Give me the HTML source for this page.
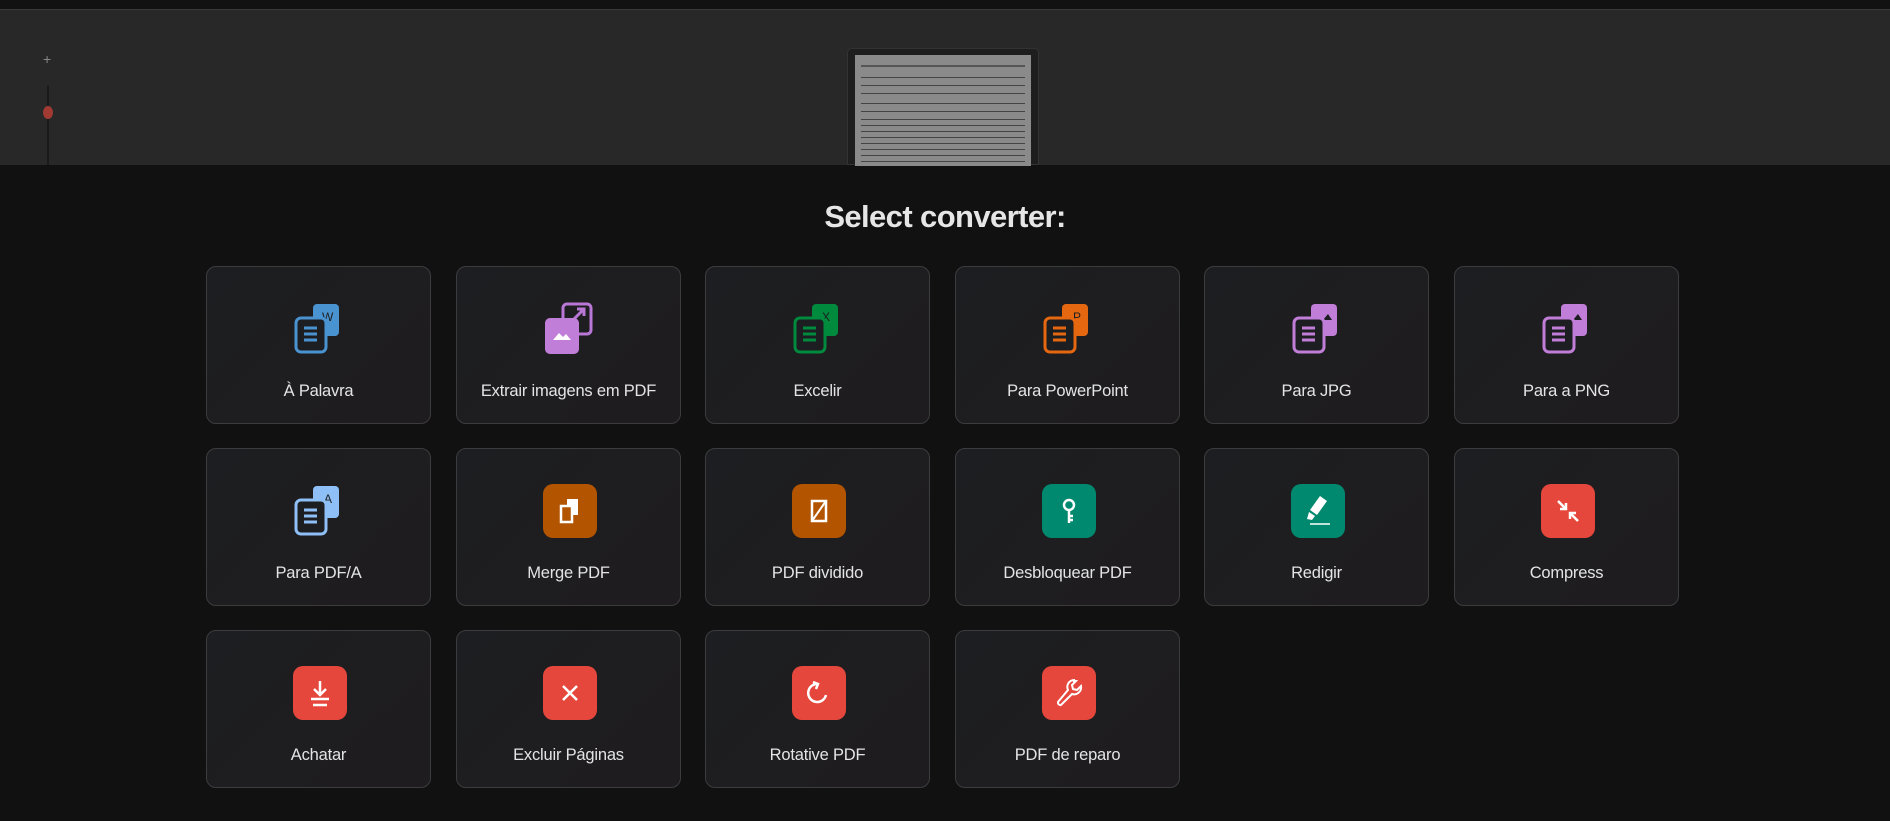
<!DOCTYPE html>
<html><head><meta charset="utf-8"><style>
*{box-sizing:border-box;margin:0;padding:0}
body{width:1890px;height:821px;background:#111112;font-family:"Liberation Sans",sans-serif;position:relative;overflow:hidden}
.topbar{position:absolute;left:0;top:0;width:1890px;height:10px;background:#121212;border-bottom:1px solid #3a3a3a}
.viewer{position:absolute;left:0;top:10px;width:1890px;height:155px;background:#282828}
.plus{position:absolute;left:43px;top:41px;color:#888;font-size:14px}
.track{position:absolute;left:47px;top:75px;width:2px;height:80px;background:#1a1a1a}
.dot{position:absolute;left:43px;top:96px;width:10px;height:13px;border-radius:50%;background:#a13a33}
.thumb{position:absolute;left:847px;top:48px;width:192px;height:117px;background:#1e1e1e;border-radius:5px 5px 0 0;border:1px solid #333}
.page{position:absolute;left:7px;top:6px;width:176px;height:111px;background:#8a8a8a;overflow:hidden}
.page i{position:absolute;left:6px;right:6px;height:1px;background:#444}
h1{position:absolute;left:0;width:1890px;top:199px;text-align:center;color:#e6e6e6;font-size:31px;font-weight:bold;letter-spacing:-0.6px}
.card{position:absolute;width:225px;height:158px;border:1px solid #3c3c3e;border-radius:10px;background:linear-gradient(135deg,#1d1e21,#1e1c1e)}
.ic{position:absolute;left:86px;top:35px;width:54px;height:54px}
.lb{position:absolute;left:0;width:100%;top:115px;text-align:center;color:#e4e4e4;font-size:16.5px;letter-spacing:-0.2px}
.sq{width:54px;height:54px;border-radius:10px;display:flex;align-items:center;justify-content:center}
</style></head><body>
<div class="topbar"></div>
<div class="viewer">
<div class="plus">+</div><div class="track"></div><div class="dot"></div>
</div>
<div class="thumb"><div class="page">
<i style="top:10px;background:#555;height:2px"></i><i style="top:22px"></i><i style="top:30px"></i><i style="top:38px"></i><i style="top:48px"></i><i style="top:56px"></i><i style="top:64px"></i><i style="top:70px"></i><i style="top:76px"></i><i style="top:82px"></i><i style="top:88px"></i><i style="top:94px"></i><i style="top:100px"></i><i style="top:106px"></i>
</div></div>
<h1>Select converter:</h1>

<div class="card" style="left:206px;top:266px"><div class="ic"><svg width="54" height="54" viewBox="0 0 54 54"><rect x="20" y="2" width="26" height="32" rx="4" fill="#4a93d1"/><text x="29" y="19" font-size="12" fill="#1d1e21" font-family="Liberation Sans">W</text><rect x="3" y="16" width="30" height="34" rx="5" fill="#1d1e21" stroke="#4a93d1" stroke-width="3"/><path d="M11 26h13M11 32h13M11 38h13" stroke="#4a93d1" stroke-width="3"/></svg></div><div class="lb">À Palavra</div></div>
<div class="card" style="left:456px;top:266px"><div class="ic"><svg width="54" height="54" viewBox="0 0 54 54"><rect x="20" y="2" width="28" height="30" rx="4" fill="none" stroke="#b978d6" stroke-width="3"/><path d="M31 17l10-10M34 7h7v7" stroke="#b978d6" stroke-width="3" fill="none"/><rect x="2" y="16" width="34" height="36" rx="5" fill="#c17ed9"/><path d="M10 38l6-7 4 4 3-3 5 6z" fill="#fff"/></svg></div><div class="lb">Extrair imagens em PDF</div></div>
<div class="card" style="left:705px;top:266px"><div class="ic"><svg width="54" height="54" viewBox="0 0 54 54"><rect x="20" y="2" width="26" height="32" rx="4" fill="#008a3d"/><text x="30" y="19" font-size="12" fill="#1d1e21">X</text><rect x="3" y="16" width="30" height="34" rx="5" fill="#1d1e21" stroke="#008a3d" stroke-width="3"/><path d="M11 26h13M11 32h13M11 38h13" stroke="#008a3d" stroke-width="3"/></svg></div><div class="lb">Excelir</div></div>
<div class="card" style="left:955px;top:266px"><div class="ic"><svg width="54" height="54" viewBox="0 0 54 54"><rect x="20" y="2" width="26" height="32" rx="4" fill="#e56710"/><text x="31" y="19" font-size="12" fill="#1d1e21">P</text><rect x="3" y="16" width="30" height="34" rx="5" fill="#1d1e21" stroke="#e56710" stroke-width="3"/><path d="M11 26h13M11 32h13M11 38h13" stroke="#e56710" stroke-width="3"/></svg></div><div class="lb">Para PowerPoint</div></div>
<div class="card" style="left:1204px;top:266px"><div class="ic"><svg width="54" height="54" viewBox="0 0 54 54"><rect x="20" y="2" width="26" height="32" rx="4" fill="#c17ed9"/><path d="M32 18l5-6 4 6z" fill="#1d1e21"/><rect x="3" y="16" width="30" height="34" rx="5" fill="#1d1e21" stroke="#c17ed9" stroke-width="3"/><path d="M11 26h13M11 32h13M11 38h13" stroke="#c17ed9" stroke-width="3"/></svg></div><div class="lb">Para JPG</div></div>
<div class="card" style="left:1454px;top:266px"><div class="ic"><svg width="54" height="54" viewBox="0 0 54 54"><rect x="20" y="2" width="26" height="32" rx="4" fill="#c17ed9"/><path d="M32 18l5-6 4 6z" fill="#1d1e21"/><rect x="3" y="16" width="30" height="34" rx="5" fill="#1d1e21" stroke="#c17ed9" stroke-width="3"/><path d="M11 26h13M11 32h13M11 38h13" stroke="#c17ed9" stroke-width="3"/></svg></div><div class="lb">Para a PNG</div></div>

<div class="card" style="left:206px;top:448px"><div class="ic"><svg width="54" height="54" viewBox="0 0 54 54"><rect x="20" y="2" width="26" height="32" rx="4" fill="#8ec0f7"/><text x="31" y="19" font-size="12" fill="#1d1e21">A</text><rect x="3" y="16" width="30" height="34" rx="5" fill="#1d1e21" stroke="#8ec0f7" stroke-width="3"/><path d="M11 26h13M11 32h13M11 38h13" stroke="#8ec0f7" stroke-width="3"/></svg></div><div class="lb">Para PDF/A</div></div>
<div class="card" style="left:456px;top:448px"><div class="ic sq" style="background:#b35400"><svg width="30" height="30" viewBox="0 0 30 30"><rect x="12" y="3" width="11" height="16" fill="#fff"/><rect x="6" y="10" width="11" height="16" fill="#b35400" stroke="#fff" stroke-width="2.5"/></svg></div><div class="lb">Merge PDF</div></div>
<div class="card" style="left:705px;top:448px"><div class="ic sq" style="background:#b35400"><svg width="30" height="30" viewBox="0 0 30 30"><rect x="8" y="5" width="14" height="20" fill="none" stroke="#fff" stroke-width="2.5"/><path d="M8 25L22 5" stroke="#fff" stroke-width="2"/></svg></div><div class="lb">PDF dividido</div></div>
<div class="card" style="left:955px;top:448px"><div class="ic sq" style="background:#00896f"><svg width="30" height="30" viewBox="0 0 30 30"><circle cx="15" cy="9" r="5" fill="none" stroke="#fff" stroke-width="2.5"/><path d="M15 14v13M15 20h4M15 24h4" stroke="#fff" stroke-width="2.5"/></svg></div><div class="lb">Desbloquear PDF</div></div>
<div class="card" style="left:1204px;top:448px"><div class="ic sq" style="background:#00896f"><svg width="40" height="40" viewBox="0 0 40 40"><path d="M22 5l7 5-10 14-7-5z" fill="#fff"/><path d="M11 21l6 4-3 4-5-1z" fill="#fff"/><path d="M12 33h20" stroke="#fff" stroke-width="1.5"/></svg></div><div class="lb">Redigir</div></div>
<div class="card" style="left:1454px;top:448px"><div class="ic sq" style="background:#e5473d"><svg width="30" height="30" viewBox="0 0 30 30"><path d="M5 5l8 8M13 7v6H7M25 25l-8-8M17 23v-6h6" stroke="#fff" stroke-width="2.5" fill="none"/></svg></div><div class="lb">Compress</div></div>

<div class="card" style="left:206px;top:630px"><div class="ic sq" style="background:#e5473d"><svg width="30" height="30" viewBox="0 0 30 30"><path d="M15 3v13M9 11l6 6 6-6M6 21h18M8 27h14" stroke="#fff" stroke-width="2.5" fill="none"/></svg></div><div class="lb">Achatar</div></div>
<div class="card" style="left:456px;top:630px"><div class="ic sq" style="background:#e5473d"><svg width="30" height="30" viewBox="0 0 30 30"><path d="M8 8l14 14M22 8L8 22" stroke="#fff" stroke-width="2.5"/></svg></div><div class="lb">Excluir Páginas</div></div>
<div class="card" style="left:705px;top:630px"><div class="ic sq" style="background:#e5473d"><svg width="30" height="30" viewBox="0 0 30 30"><path d="M13 6a9 9 0 1 0 9 11" stroke="#fff" stroke-width="2.5" fill="none"/><path d="M9 4l5 2-2 5" stroke="#fff" stroke-width="2.5" fill="none"/></svg></div><div class="lb">Rotative PDF</div></div>
<div class="card" style="left:955px;top:630px"><div class="ic sq" style="background:#e5473d"><svg width="34" height="34" viewBox="0 0 34 34"><path d="M22 4a7 7 0 0 0-6 10L6 26a2.5 2.5 0 0 0 3 3l11-11a7 7 0 0 0 9-8l-4 4-4-1-1-4 4-4a7 7 0 0 0-2 0z" fill="none" stroke="#fff" stroke-width="2"/></svg></div><div class="lb">PDF de reparo</div></div>
</body></html>
